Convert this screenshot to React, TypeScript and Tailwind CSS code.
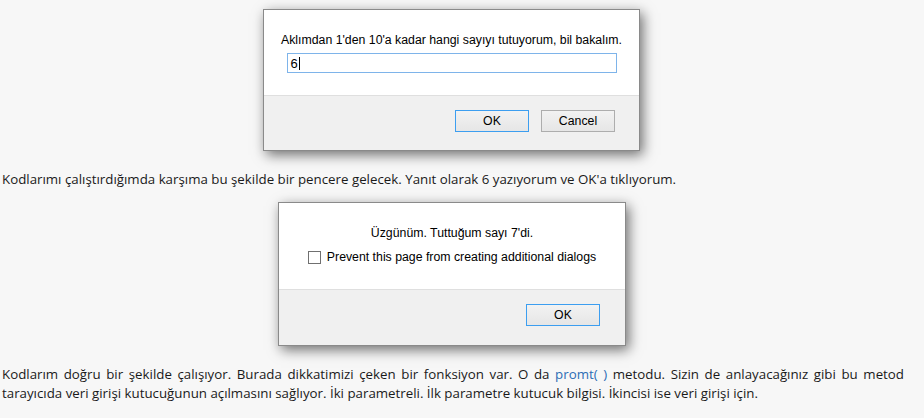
export default function App() {
  const dlgFont = { fontFamily: '"Liberation Sans", Arial, sans-serif' };
  const bodyFont = { fontFamily: '"Open Sans", Lato, sans-serif' };
  return (
    <div className="min-h-[418px] w-[924px] bg-[#f7f7f7] pt-[9px] text-[#1a1a1a]">
      {/* prompt dialog */}
      <div
        className="ml-[263px] w-[377px] border border-[#8a8a8a] bg-white text-[12.3px] leading-[15px] text-black shadow-[3px_4px_12px_rgba(0,0,0,0.55)]"
        style={dlgFont}
      >
        <div className="flex h-[85px] flex-col items-center pt-[23px]">
          <p>Aklımdan 1'den 10'a kadar hangi sayıyı tutuyorum, bil bakalım.</p>
          <div className="mt-[5px] flex h-[20px] w-[330px] items-center border border-[#7eb4ea] px-[3px]">
            <span className="text-[13px]">6</span>
            <span className="ml-px h-[13px] w-px bg-black" />
          </div>
        </div>
        <div className="flex h-[55px] justify-end gap-[12px] border-t border-[#dfdfdf] bg-[#f0f0f0] pr-[24px] pt-[14px]">
          <button className="h-[22px] w-[74px] border border-[#3c9ef0] bg-gradient-to-b from-[#f2f2f2] to-[#e6e6e6]">
            OK
          </button>
          <button className="h-[22px] w-[74px] border border-[#adadad] bg-gradient-to-b from-[#f2f2f2] to-[#e6e6e6]">
            Cancel
          </button>
        </div>
      </div>

      <p className="mt-[19px] pl-[2px] text-[13.3px] leading-[19px]" style={bodyFont}>
        Kodlarımı çalıştırdığımda karşıma bu şekilde bir pencere gelecek. Yanıt olarak 6 yazıyorum ve OK'a tıklıyorum.
      </p>

      {/* alert dialog */}
      <div
        className="ml-[278px] mt-[13px] w-[348px] border border-[#8a8a8a] bg-white text-[12.3px] leading-[15px] text-black shadow-[3px_4px_12px_rgba(0,0,0,0.55)]"
        style={dlgFont}
      >
        <div className="flex h-[86px] flex-col items-center pt-[23px]">
          <p>Üzgünüm. Tuttuğum sayı 7'di.</p>
          <label className="mt-[9px] flex items-center gap-[6px]">
            <span className="h-[13px] w-[13px] border border-[#707070] bg-white" />
            <span>Prevent this page from creating additional dialogs</span>
          </label>
        </div>
        <div className="flex h-[56px] justify-end border-t border-[#dfdfdf] bg-[#f0f0f0] pr-[25px] pt-[14px]">
          <button className="h-[22px] w-[74px] border border-[#3c9ef0] bg-gradient-to-b from-[#f2f2f2] to-[#e6e6e6]">
            OK
          </button>
        </div>
      </div>

      <div className="mt-[19px] w-[904px] pl-[2px] text-[13.3px] leading-[19px]" style={bodyFont}>
        <p className="text-justify [text-align-last:justify]">
          Kodlarım doğru bir şekilde çalışıyor. Burada dikkatimizi çeken bir fonksiyon var. O da{" "}
          <span className="text-[#2d6db5]">promt( )</span> metodu. Sizin de anlayacağınız gibi bu metod
        </p>
        <p>
          tarayıcıda veri girişi kutucuğunun açılmasını sağlıyor. İki parametreli. İlk parametre kutucuk
          bilgisi. İkincisi ise veri girişi için.
        </p>
      </div>
    </div>
  );
}
